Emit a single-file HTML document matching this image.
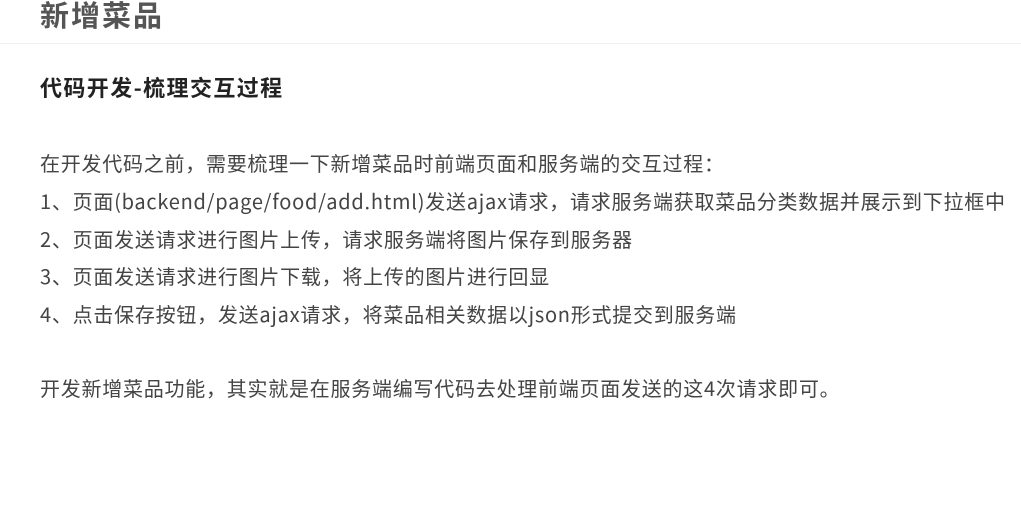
<!DOCTYPE html>
<html><head><meta charset="utf-8"><style>
body{margin:0;width:1021px;height:522px;background:#fff;overflow:hidden;font-family:"Noto Sans CJK SC",sans-serif;}
.t{position:absolute;left:40px;top:-6px;font-size:29px;font-weight:bold;color:#555;line-height:40px;white-space:nowrap;letter-spacing:2px}
.hr{position:absolute;left:0;right:0;top:43px;height:1px;background:#f0f0f0}
.h{position:absolute;left:40px;top:72px;font-size:22px;font-weight:bold;color:#222;line-height:30px;white-space:nowrap;letter-spacing:1.4px}
.b{position:absolute;left:40px;font-size:20px;color:#444;line-height:28px;white-space:nowrap;letter-spacing:0.75px}
</style></head><body>
<div class="t">新增菜品</div>
<div class="hr"></div>
<div class="h">代码开发-梳理交互过程</div>
<div class="b" style="top:149px">在开发代码之前，需要梳理一下新增菜品时前端页面和服务端的交互过程：</div>
<div class="b" style="top:187px">1、页面(backend/page/food/add.html)发送ajax请求，请求服务端获取菜品分类数据并展示到下拉框中</div>
<div class="b" style="top:225px">2、页面发送请求进行图片上传，请求服务端将图片保存到服务器</div>
<div class="b" style="top:262px">3、页面发送请求进行图片下载，将上传的图片进行回显</div>
<div class="b" style="top:300px">4、点击保存按钮，发送ajax请求，将菜品相关数据以json形式提交到服务端</div>
<div class="b" style="top:374px">开发新增菜品功能，其实就是在服务端编写代码去处理前端页面发送的这4次请求即可。</div>
</body></html>
